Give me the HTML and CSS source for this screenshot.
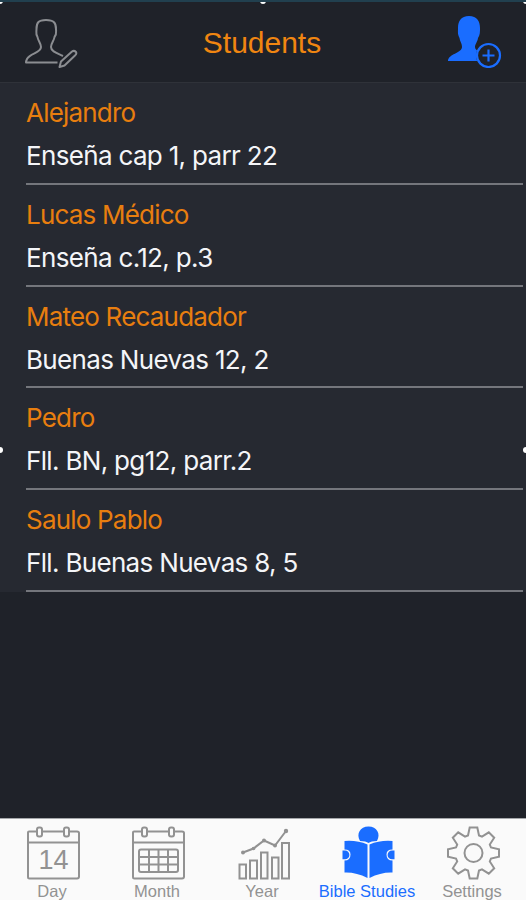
FILE: index.html
```html
<!doctype html>
<html lang="en">

<head>
  <meta charset="UTF-8">
  <meta name="viewport" content="width=device-width, initial-scale=1.0">
  <title>Students</title>
  <link rel="stylesheet" href="styles.css">
</head>

<body>
  <div class="app">
    <i class="handle top-left"></i>
    <i class="handle top"></i>
    <i class="handle top-right"></i>
    <i class="handle left"></i>
    <i class="handle right"></i>

    <header class="navbar">
      <svg class="edit" width="56" height="56" viewBox="0 0 56 56">
        <path d="M41 44 C36 41.500 29 40 29 35 C29 31 32 29 32.500 25 C35 22 34 20 34 17 C34 11 32 8 24 8 C16 8 14.500 11 14.500 17 C14.500 20 13.500 22 15.500 25 C16 29 19 31 19 35 C19 41 8 41 5 47 Q4 49 4 50.500 H35.500" />
        <path d="M37.500 55 L39 49.500 L50 39.500 Q52 38 54 40 Q55 42 53 43.500 L42.500 53.500 Z" />
      </svg>
      <h1>Students</h1>
      <svg class="add" width="56" height="56" viewBox="0 0 56 56">
        <path d="M2 49 C2 42 16 41 16 35 C16 31 14 30 13.500 26 C11.500 22 12 20 12 16 C12 9 15 4 23 4 C31 4 34 9 34 16 C34 20 34 23 32 26 C31.500 30 29 32 29 35 C29 39 36 41 44 45 V49 Z" />
        <circle class="disc" cx="42.500" cy="43.500" r="12.500" />
        <circle class="ring" cx="42.500" cy="43.500" r="11.500" />
        <path class="ring" d="M42.500 37.500 V49.500 M36.500 43.500 H48.500" />
      </svg>
    </header>

    <ul class="list">
      <li>
        <h2>Alejandro</h2>
        <p>Enseña cap 1, parr 22</p>
      </li>
      <li>
        <h2>Lucas Médico</h2>
        <p>Enseña c.12, p.3</p>
      </li>
      <li>
        <h2>Mateo Recaudador</h2>
        <p>Buenas Nuevas 12, 2</p>
      </li>
      <li>
        <h2>Pedro</h2>
        <p>Fll. BN, pg12, parr.2</p>
      </li>
      <li>
        <h2>Saulo Pablo</h2>
        <p>Fll. Buenas Nuevas 8, 5</p>
      </li>
    </ul>

    <nav class="tabs">
      <a class="tab">
        <svg width="56" height="56" viewBox="0 0 56 56">
          <path d="M11.500 6.500 H4 Q3 6.500 3 7.500 V52 Q3 53.500 4.500 53.500 H52 Q54 53.500 54 51.500 V8 Q54 6.500 52 6.500 H45 M17.500 6.500 H38.500 M3 17.500 H54" />
          <rect x="12" y="2.500" width="5" height="9" rx="2" />
          <rect x="39" y="2.500" width="5" height="9" rx="2" />
          <text x="28.500" y="44">14</text>
        </svg>
        <span>Day</span>
      </a>
      <a class="tab">
        <svg width="56" height="56" viewBox="0 0 56 56">
          <path d="M11.500 6.500 H4 Q3 6.500 3 7.500 V52 Q3 53.500 4.500 53.500 H52 Q54 53.500 54 51.500 V8 Q54 6.500 52 6.500 H45 M17.500 6.500 H38.500 M3 17.500 H54" />
          <rect x="12" y="2.500" width="5" height="9" rx="2" />
          <rect x="39" y="2.500" width="5" height="9" rx="2" />
          <rect x="9" y="24.500" width="39" height="22.500" rx="2" />
          <path d="M9 32 H48 M9 39.500 H48 M19 24.500 V47 M28.500 24.500 V47 M38 24.500 V47" />
        </svg>
        <span>Month</span>
      </a>
      <a class="tab">
        <svg width="56" height="56" viewBox="0 0 56 56">
          <path d="M4.500 39.500 H11 V53.500 H4.500 Z M15 35.500 H22 V53.500 H15 Z M26 27.500 H32.500 V53.500 H26 Z M37 32.500 H43.500 V53.500 H37 Z M47 18 H54 V53.500 H47 Z" />
          <path d="M8 27.500 L18.500 23.500 L29 15.500 L40 20.500 L51 6" />
          <g class="dots">
            <circle cx="8" cy="27.500" r="2" />
            <circle cx="18.500" cy="23.500" r="1.800" />
            <circle cx="29" cy="15.500" r="2" />
            <circle cx="40" cy="20.500" r="2" />
            <circle cx="51" cy="6" r="2.200" />
          </g>
        </svg>
        <span>Year</span>
      </a>
      <a class="tab active">
        <svg width="56" height="56" viewBox="0 0 56 56">
          <path d="M20 16 C16 9 20 1.500 28.500 1.500 C37 1.500 41 9 37 16 Q31 16 28.500 18 Q26 16 20 16 Z" />
          <path d="M4.500 16 Q17 15 27.500 19.500 V53 Q16 47 4.500 47.500 V35.500 Q10.500 35.500 10.500 29.500 Q10.500 24.500 4.500 24.500 Z" />
          <path d="M52.500 16 Q40 15 29.500 19.500 V53 Q41 47 52.500 47.500 V35.500 Q46.500 35.500 46.500 29.500 Q46.500 24.500 52.500 24.500 Z" />
          <path d="M2.500 25.500 H5 A4.300 4.300 0 0 1 5 34.300 H2.500 Z M54.500 25.500 H52 A4.300 4.300 0 0 0 52 34.300 H54.500 Z" />
        </svg>
        <span>Bible Studies</span>
      </a>
      <a class="tab">
        <svg width="56" height="56" viewBox="-28.500 -28 56 56">
          <path d="M-3.800 -25.500 H3.800 L5.500 -17.500 L8.500 -16.300 L15.300 -20.700 L20.700 -15.300 L16.300 -8.500 L17.500 -5.500 L25.500 -3.800 V3.800 L17.500 5.500 L16.300 8.500 L20.700 15.300 L15.300 20.700 L8.500 16.300 L5.500 17.500 L3.800 25.500 H-3.800 L-5.500 17.500 L-8.500 16.300 L-15.300 20.700 L-20.700 15.300 L-16.300 8.500 L-17.500 5.500 L-25.500 3.800 V-3.800 L-17.500 -5.500 L-16.300 -8.500 L-20.700 -15.300 L-15.300 -20.700 L-8.500 -16.300 L-5.500 -17.500 Z" />
          <circle r="9" />
        </svg>
        <span>Settings</span>
      </a>
    </nav>
  </div>
</body>

</html>
```
FILE: styles.css
```css
* {
  margin: 0;
  padding: 0;
  box-sizing: border-box;
}

body {
  background-color: #1f2229;
}

.app {
  position: relative;
  display: flex;
  flex-direction: column;
  height: 900px;
  overflow: hidden;
  border-top: 2px solid #21404f;
  font-family: "Liberation Sans", sans-serif;
}

/* selection handles around the screen */
.handle {
  position: absolute;
  width: 6px;
  height: 6px;
  border-radius: 50%;
  background-color: #fff;
}

.top-left {
  left: -3px;
  top: -4px;
}

.top {
  left: 260px;
  top: -4px;
}

.top-right {
  right: -3px;
  top: -4px;
}

.left {
  left: -3px;
  top: 445px;
}

.right {
  right: -3px;
  top: 445px;
}

.navbar {
  display: flex;
  justify-content: space-between;
  flex: none;
  height: 81px;
  padding: 10px 24px 0 22px;
  border-bottom: 1px solid #2f3239;
}

.navbar h1 {
  margin-top: 11px;
  font-size: 30px;
  line-height: 40px;
  font-weight: 400;
  color: #f08611;
}

.edit {
  fill: none;
  stroke: #8b8d91;
  stroke-width: 2;
  stroke-linejoin: round;
}

.add {
  fill: #1a6dff;
}

.add .disc {
  fill: #1f2229;
}

.add .ring {
  fill: none;
  stroke: #1a6dff;
  stroke-width: 2.2;
}

.list {
  list-style: none;
  padding: 0 3px 0 26px;
  background-color: #262931;
  font-family: Inter, "Liberation Sans", sans-serif;
}

.list li {
  height: 101.75px;
  padding-top: 8px;
  border-bottom: 2px solid #74767c;
}

.list h2,
.list p {
  font-size: 26px;
  line-height: 43px;
  font-weight: 400;
  white-space: nowrap;
}

.list h2 {
  letter-spacing: -0.8px;
  color: #e87e0f;
}

.list p {
  letter-spacing: -0.67px;
  color: #f4f5f8;
}

.tabs {
  display: flex;
  flex: none;
  height: 82px;
  margin-top: auto;
  padding-top: 6px;
  border-top: 1px solid #a5a7aa;
  background-color: #fafafa;
}

.tab {
  display: flex;
  flex-direction: column;
  align-items: center;
  width: 105px;
  color: #929292;
}

.tab svg {
  flex: none;
  fill: none;
  stroke: #929292;
  stroke-width: 2;
}

.tab text {
  fill: #929292;
  stroke: none;
  font-size: 27px;
  text-anchor: middle;
}

.tab span {
  margin-right: 1px;
  font-size: 16.5px;
  line-height: 21px;
  white-space: nowrap;
}

.dots {
  fill: #929292;
  stroke: none;
}

.active {
  color: #1a6dff;
}

.active svg {
  fill: #1a6dff;
  stroke: none;
}
```
